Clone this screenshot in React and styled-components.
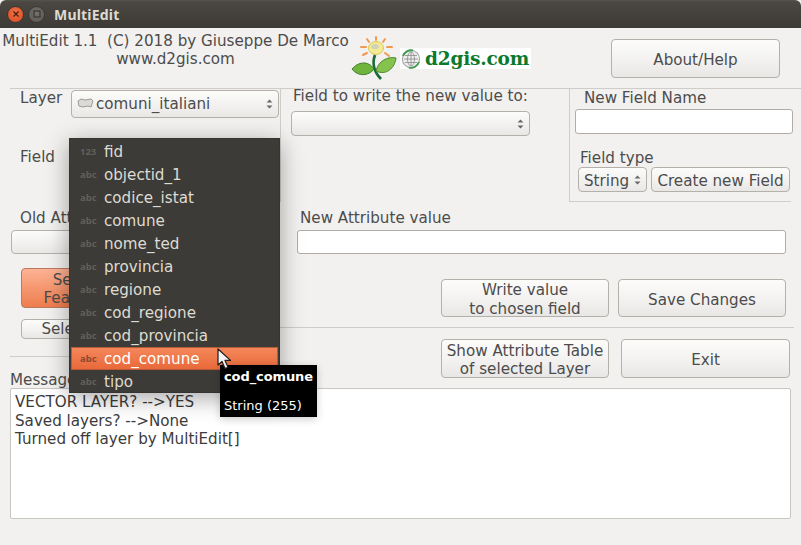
import React from "react";
import styled, { createGlobalStyle, css } from "styled-components";

const Global = createGlobalStyle`
  html, body { margin: 0; padding: 0; background: #f2f1f0; }
  body { font-family: "DejaVu Sans", "Noto Sans", sans-serif; font-size: 15.15px; color: #4c4c4c; }
`;

const Window = styled.div`
  width: 801px; height: 545px; position: relative; overflow: hidden;
  background: #f2f1f0; display: flex; flex-direction: column;
`;
const TitleBar = styled.div`
  height: 28px; flex: none; display: flex; align-items: center; padding-left: 7px; box-sizing: border-box;
  background: linear-gradient(#56534c 0, #4b4842 2px, #3d3b37 100%);
  border-radius: 6px 6px 0 0;
`;
const WinBtn = styled.span`
  width: 17px; height: 17px; border-radius: 50%; margin-right: 4px; display: flex; align-items: center; justify-content: center;
  background: ${p => p.$close ? "radial-gradient(circle at 50% 40%, #f0734a, #d9481c)" : "radial-gradient(circle at 50% 40%, #74716b, #595752)"};
  border: 1px solid #383733; box-sizing: border-box;
`;
const TitleText = styled.span`
  font: bold 14px "Noto Sans", sans-serif; color: #dfdbd2; margin-left: 5px; letter-spacing: .2px;
`;
const Header = styled.div`
  height: 60px; flex: none; display: flex; box-sizing: border-box;
`;
const Credit = styled.div`
  width: 351px; flex: none; text-align: center; line-height: 18px; padding-top: 4px; white-space: pre;
`;
const LogoArea = styled.div`
  display: flex; align-items: flex-start; padding-top: 8px; width: 180px; flex: none;
`;
const LogoPlate = styled.div`
  background: #fff; height: 21px; margin: 12px 0 0 3px; width: 131px; display: flex; align-items: center; gap: 4px; box-sizing: border-box; padding-left: 1px;
  font: bold 18.5px "DejaVu Serif", serif; color: #0c7a2b; letter-spacing: -.2px;
`;
const Button = styled.button`
  font: inherit; color: inherit; line-height: ${p => p.$lh || 18}px; padding: ${p => p.$pt ?? 2}px 0 0; flex: none; box-sizing: border-box; white-space: nowrap;
  width: ${p => p.$w}px; height: ${p => p.$h}px;
  border: 1px solid #b4b0aa; border-radius: 4px;
  background: linear-gradient(#fcfcfb, #f4f3f2 50%, #e8e7e5);
  ${p => p.$orange && css`
    background: linear-gradient(#fdb394, #ee7c4d);
    border-color: #b97a60;
  `}
`;
const AboutBtn = styled(Button)`
  margin: 11px 0 0 80px;
`;
const TopSection = styled.div`
  margin-left: 10px; height: 114px; flex: none; display: flex; border-top: 1px solid #cfcdca; box-sizing: border-box;
`;
const Col = styled.div`
  box-sizing: border-box; flex: none; width: ${p => p.$w}px; position: relative;
  ${p => p.$rule && "border-right: 1px solid #cfcdca;"}
  ${p => p.$under && "border-bottom: 1px solid #cfcdca;"}
`;
const LayerRow = styled.div`
  display: flex; padding: 1px 0 0 10px; align-items: flex-start;
`;
const Label = styled.div`
  line-height: ${p => p.$lh || 18}px; white-space: nowrap; flex: none;
  padding: ${p => p.$pad || "0"};
  ${p => p.$w && `width: ${p.$w}px;`}
`;
const Combo = styled.div`
  width: ${p => p.$w}px; height: ${p => p.$h || 28}px; box-sizing: border-box; flex: none; display: flex; align-items: center; gap: 2px;
  border: 1px solid #b4b0aa; border-radius: 4px; background: linear-gradient(#fcfcfb, #f2f1f0 55%, #e9e8e6);
  padding: ${p => p.$pt || 0}px 5px 0; position: relative; margin-left: ${p => p.$ml || 0}px;
`;
const Spin = styled.svg`
  position: absolute; right: 5px; top: 50%; margin-top: -5px;
`;
const Input = styled.div`
  box-sizing: border-box; width: ${p => p.$w}px; height: ${p => p.$h || 24}px; background: #fff;
  border: 1px solid #b0aca6; border-radius: 3px; margin: ${p => p.$m || 0};
`;
const FieldTypeRow = styled.div`
  display: flex; gap: 4px; padding-left: 8px;
`;
const Lower = styled.div`
  display: flex; flex: none; height: 186px; margin-left: 10px;
`;
const LeftStack = styled.div`
  width: 270px; flex: none;
`;
const LowerLeft = styled.div`
  height: 155px; box-sizing: border-box; border-bottom: 1px solid #cfcdca; padding-top: 7px;
`;
const LowerRight = styled.div`
  flex: none; width: 514px; display: flex; flex-direction: column;
`;
const AttrPart = styled.div`
  height: 126px; flex: none; box-sizing: border-box; border-bottom: 1px solid #cfcdca; padding: 7px 0 0 17px;
`;
const BtnRow = styled.div`
  display: flex; gap: ${p => p.$gap}px; padding-left: ${p => p.$pl}px; margin-top: ${p => p.$mt}px;
`;
const SelBtn = styled(Button)`
  text-align: center; display: block; margin-left: 11px; margin-top: ${p => p.$mt}px;
`;
const MessageLabel = styled(Label)`
  margin: 15px 0 0 0; line-height: 16px;
`;
const MsgBox = styled.div`
  margin: 0 0 0 10px; box-sizing: border-box; width: 781px; height: 131px; background: #fff;
  border: 1px solid #c9c6c2; border-radius: 2px; padding: 4px 4px; line-height: 18.5px; color: #3c3c3c; white-space: pre;
`;
const Popup = styled.div`
  position: absolute; left: 69px; top: 138px; width: 211px; height: 255px; box-sizing: border-box; padding: 1px 1px;
  background: #3c3b37; border: 1px solid #353430; box-shadow: 0 5px 22px rgba(0,0,0,.35);
`;
const Item = styled.div`
  height: 23px; display: flex; align-items: center; box-sizing: border-box; padding-left: 9px;
  color: ${p => p.$sel ? "#fff" : "#dfdbd2"};
  ${p => p.$sel && css`
    background: linear-gradient(#f4875a, #e9693a);
    border: 1px solid #b85a36; padding-left: 8px;
  `}
`;
const TypeTag = styled.span`
  width: 24px; flex: none; font: bold 9.5px "Noto Sans", sans-serif; color: ${p => p.$sel ? "#8c4a30" : "#625f59"};
`;
const Tooltip = styled.div`
  position: absolute; left: 220px; top: 365px; width: 97px; height: 52px; box-sizing: border-box; background: #000; color: #fff;
  padding: 2px 4px; font-size: 13px; line-height: 19px; box-shadow: 0 2px 8px rgba(0,0,0,.2);
`;
const TipName = styled.div`font-weight: bold; margin-bottom: 10px; letter-spacing: -.1px;`;
const Cursor = styled.svg`
  position: absolute; left: 217px; top: 348px;
`;

const SpinIcon = () => (
  <Spin width="7" height="10" viewBox="0 0 7 10"><path d="M3.5 0.5L6.5 3.5H.5zM3.5 9.5L6.5 6.5H.5z" fill="#6a6864" /></Spin>
);

const fields = ["fid","objectid_1","codice_istat","comune","nome_ted","provincia","regione","cod_regione","cod_provincia","cod_comune","tipo"];

const Flower = () => (
  <svg width="46" height="44" viewBox="0 0 46 44">
    <g stroke="#ee9a52" strokeWidth="2" strokeLinecap="round">
      <path d="M25 1v3M16 3l2 3M34 3l-2 3M10 11h5M41 11h-5M12 19l4-2M38 20l-4-3" />
    </g>
    <ellipse cx="25" cy="12" rx="7.5" ry="6.5" fill="#f3ea95" stroke="#dcc854" />
    <ellipse cx="24" cy="10.5" rx="3.8" ry="2.6" fill="#cfd2b8" />
    <path d="M24 19C21 27 23 36 30 43" stroke="#1a6a3a" strokeWidth="2.8" fill="none" />
    <path d="M23 33C17 24 7 26 1 33 7 41 18 40 23 33z" fill="#6fb43d" stroke="#3d7d2a" />
    <path d="M25 35C27 25 37 20 45 22 44 32 35 40 25 35z" fill="#86c24e" stroke="#4b8a2e" />
  </svg>
);

const Globe = () => (
  <svg width="20" height="20" viewBox="0 0 20 20">
    <circle cx="10" cy="10" r="8.6" fill="#eee" stroke="#aaa" strokeWidth="1.2" />
    <path d="M2 7A8.6 8.6 0 0 1 12 1.5M18 13A8.6 8.6 0 0 1 8 18.6" stroke="#3f9a4e" strokeWidth="1.8" fill="none" />
    <g stroke="#8a8a8a" strokeWidth=".8" fill="none">
      <ellipse cx="10" cy="10" rx="3.5" ry="7" />
      <path d="M10 3v14M3 10h14M4 6.5h12M4 13.5h12" />
    </g>
  </svg>
);

export default function App() {
  return (
    <Window>
      <Global />
      <TitleBar>
        <WinBtn $close>
          <svg width="8" height="8" viewBox="0 0 8 8"><path d="M1.5 1.5l5 5M6.5 1.5l-5 5" stroke="#4a1c0c" strokeWidth="1.3" /></svg>
        </WinBtn>
        <WinBtn>
          <svg width="8" height="8" viewBox="0 0 8 8"><rect x="1" y="1" width="6" height="6" fill="none" stroke="#3a3935" strokeWidth="1.3" /></svg>
        </WinBtn>
        <TitleText>MultiEdit</TitleText>
      </TitleBar>
      <Header>
        <Credit>{"MultiEdit 1.1  (C) 2018 by Giuseppe De Marco\nwww.d2gis.com"}</Credit>
        <LogoArea>
          <Flower />
          <LogoPlate><Globe />d2gis.com</LogoPlate>
        </LogoArea>
        <AboutBtn $w={169} $h={39}>About/Help</AboutBtn>
      </Header>
      <TopSection>
        <Col $w={271} $rule>
          <LayerRow>
            <Label $w={51} $lh={16}>Layer</Label>
            <Combo $w={208}>
              <svg width="17" height="12" viewBox="0 0 17 12"><path d="M1 3l3-2 4 1 6-1 2 2-2 6-3-1-5 1-4-1z" fill="#dcdad6" stroke="#9c9a95" /></svg>
              comuni_italiani
              <SpinIcon />
            </Combo>
          </LayerRow>
          <Label $pad="30px 0 0 10px">Field</Label>
        </Col>
        <Col $w={289} $rule>
          <Label $pad="0 0 7px 12px" $lh={15}>Field to write the new value to:</Label>
          <Combo $w={239} $h={25} $ml={10}><SpinIcon /></Combo>
        </Col>
        <Col $w={221} $under>
          <Label $pad="0 0 2px 14px" $lh={18}>New Field Name</Label>
          <Input $w={218} $h={25} $m="0 0 0 5px" />
          <Label $pad="15px 0 0 10px">Field type</Label>
          <FieldTypeRow>
            <Combo $w={69} $h={25} $pt={2}>String<SpinIcon /></Combo>
            <Button $w={139} $h={25}>Create new Field</Button>
          </FieldTypeRow>
        </Col>
      </TopSection>
      <Lower>
        <LeftStack>
          <LowerLeft>
            <Label $pad="0 0 3px 10px">Old Attribute value</Label>
            <Combo $w={260} $h={24} $ml={1} />
            <SelBtn $w={110} $h={40} $orange $mt={14}>Select<br />Features</SelBtn>
            <SelBtn $w={110} $h={20} $mt={11} $pt={0}>Select all</SelBtn>
          </LowerLeft>
          <MessageLabel>Messages</MessageLabel>
        </LeftStack>
        <LowerRight>
          <AttrPart>
            <Label $pad="0 0 3px 3px">New Attribute value</Label>
            <Input $w={489} $h={24} />
            <BtnRow $gap={9} $pl={144} $mt={25}>
              <Button $w={168} $h={38} $lh={19} $pt={1}>Write value<br />to chosen field</Button>
              <Button $w={168} $h={38} $pt={3}>Save Changes</Button>
            </BtnRow>
          </AttrPart>
          <BtnRow $gap={12} $pl={161} $mt={11}>
            <Button $w={168} $h={39}>Show Attribute Table<br />of selected Layer</Button>
            <Button $w={169} $h={39}>Exit</Button>
          </BtnRow>
        </LowerRight>
      </Lower>
      <MsgBox>{"VECTOR LAYER? -->YES\nSaved layers? -->None\nTurned off layer by MultiEdit[]"}</MsgBox>

      <Popup>
        {fields.map((f, i) => (
          <Item key={f} $sel={f === "cod_comune"}>
            <TypeTag $sel={f === "cod_comune"}>{i === 0 ? "123" : "abc"}</TypeTag>{f}
          </Item>
        ))}
      </Popup>
      <Tooltip>
        <TipName>cod_comune</TipName>
        String (255)
      </Tooltip>
      <Cursor width="15" height="22" viewBox="0 0 15 22">
        <path d="M1 1v16l4-3.5 3 7 3-1.3-3-6.8h5.5z" fill="#f4f4f4" stroke="#1d1d1d" strokeWidth="1.2" strokeLinejoin="round" />
      </Cursor>
    </Window>
  );
}
